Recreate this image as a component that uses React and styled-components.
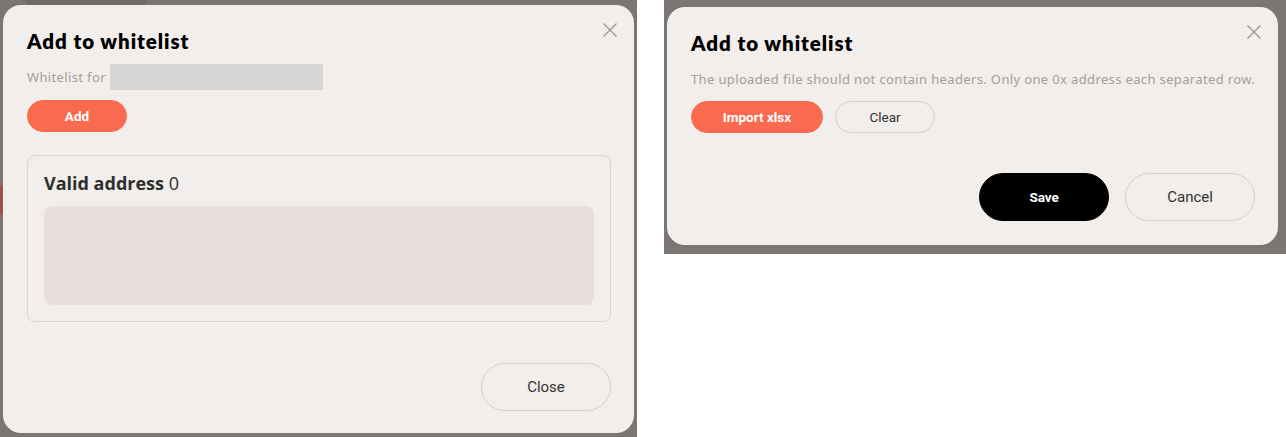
import React from "react";
import styled, { createGlobalStyle } from "styled-components";

const Global = createGlobalStyle`
  html, body { margin: 0; padding: 0; background: #ffffff; }
  * { box-sizing: border-box; }
`;

const Page = styled.div`
  display: flex;
  align-items: flex-start;
  gap: 27px;
  width: 1286px;
  height: 437px;
  overflow: hidden;
`;

const Backdrop = styled.div`
  position: relative;
  flex: none;
  width: ${(p) => p.$w}px;
  height: ${(p) => p.$h}px;
  background: #7b7674;
  padding: ${(p) => p.$pad};
  display: flex;
`;

const Ghost = styled.div`
  position: absolute;
  left: ${(p) => p.$x}px;
  top: ${(p) => p.$y}px;
  width: ${(p) => p.$w}px;
  height: ${(p) => p.$h}px;
  background: ${(p) => p.$c};
  border-radius: ${(p) => p.$r || 0}px;
`;

const Modal = styled.div`
  position: relative;
  flex: 1;
  background: #f1eeeb;
  border-radius: 18px;
  padding: 24px 23px 23px 24px;
  display: flex;
  flex-direction: column;
`;

const CloseIcon = styled.button`
  position: absolute;
  top: 18px;
  right: 17px;
  width: 14px;
  height: 14px;
  padding: 0;
  border: 0;
  background: transparent;
  display: block;
  svg { display: block; }
`;

const Title = styled.h2`
  margin: 0;
  font-family: "Lato", "Noto Sans", sans-serif;
  font-weight: 800;
  font-size: 20.5px;
  line-height: 24px;
  color: #000;
  letter-spacing: 0.95px;
`;

const InfoRow = styled.div`
  display: flex;
  align-items: center;
  margin-top: ${(p) => p.$mt}px;
  height: 26px;
`;

const Hint = styled.span`
  font-family: "Noto Sans", sans-serif;
  font-size: 13px;
  color: #a39e9b;
  letter-spacing: 0.36px;
  white-space: nowrap;
`;

const Redacted = styled.span`
  display: inline-block;
  width: 213px;
  height: 26px;
  background: #d6d6d6;
  margin-left: 4px;
`;

const ButtonRow = styled.div`
  display: flex;
  gap: 12px;
  margin-top: ${(p) => p.$mt}px;
`;

const Pill = styled.button`
  height: ${(p) => (p.$big ? 48 : 32)}px;
  width: ${(p) => p.$w}px;
  border-radius: 999px;
  font-family: "Roboto", sans-serif;
  font-weight: ${(p) => (p.$variant === "outline" ? 400 : 700)};
  cursor: pointer;
  padding: 0;
  background: ${(p) =>
    p.$variant === "primary" ? "#fa6a4f" : p.$variant === "dark" ? "#000" : "transparent"};
  color: ${(p) => (p.$variant === "outline" ? "#333" : "#fff")};
  border: 1px solid
    ${(p) =>
      p.$variant === "primary" ? "#fa6a4f" : p.$variant === "dark" ? "#000" : "#d3cfcc"};
  font-size: ${(p) => (p.$big && p.$variant === "outline" ? "15px" : "13.5px")};
`;

const AddressBox = styled.section`
  margin-top: 23px;
  border: 1px solid #d9d5d2;
  border-radius: 8px;
  padding: 16px;
`;

const BoxTitle = styled.div`
  font-family: "Open Sans", sans-serif;
  font-size: 18px;
  line-height: 22px;
  color: #2e2e2e;
  b { font-weight: 700; }
  span { font-weight: 400; }
`;

const AddressList = styled.div`
  margin-top: 12px;
  height: 99px;
  border-radius: 8px;
  background: #e8e0dd;
`;

const Footer = styled.div`
  display: flex;
  justify-content: flex-end;
  gap: 16px;
  margin-top: ${(p) => p.$mt}px;
`;

const X = () => (
  <svg width="14" height="14" viewBox="0 0 14 14">
    <path d="M0.5 0.5 L13.5 13.5 M13.5 0.5 L0.5 13.5" stroke="#9c9896" strokeWidth="1.4" fill="none" />
  </svg>
);

export default function App() {
  return (
    <>
      <Global />
      <Page>
        <Backdrop $w={637} $h={437} $pad="5px 3px 4px 3px">
          <Ghost $x={25} $y={-10} $w={123} $h={15} $r={6} $c="#6f6b69" />
          <Ghost $x={0} $y={185} $w={3} $h={30} $c="#9a5448" />
          <Modal>
            <CloseIcon aria-label="close"><X /></CloseIcon>
            <Title>Add to whitelist</Title>
            <InfoRow $mt={11}>
              <Hint>Whitelist for</Hint>
              <Redacted />
            </InfoRow>
            <ButtonRow $mt={10}>
              <Pill $variant="primary" $w={100}>Add</Pill>
            </ButtonRow>
            <AddressBox>
              <BoxTitle>
                <b>Valid address</b> <span>0</span>
              </BoxTitle>
              <AddressList />
            </AddressBox>
            <Footer $mt={41}>
              <Pill $variant="outline" $big $w={130}>Close</Pill>
            </Footer>
          </Modal>
        </Backdrop>
        <Backdrop $w={622} $h={254} $pad="7px 8px 9px 3px">
          <Modal>
            <CloseIcon aria-label="close"><X /></CloseIcon>
            <Title>Add to whitelist</Title>
            <InfoRow $mt={11}>
              <Hint>The uploaded file should not contain headers. Only one 0x address each separated row.</Hint>
            </InfoRow>
            <ButtonRow $mt={9}>
              <Pill $variant="primary" $w={132}>Import xlsx</Pill>
              <Pill $variant="outline" $w={100}>Clear</Pill>
            </ButtonRow>
            <Footer $mt={40}>
              <Pill $variant="dark" $big $w={130}>Save</Pill>
              <Pill $variant="outline" $big $w={130}>Cancel</Pill>
            </Footer>
          </Modal>
        </Backdrop>
      </Page>
    </>
  );
}
